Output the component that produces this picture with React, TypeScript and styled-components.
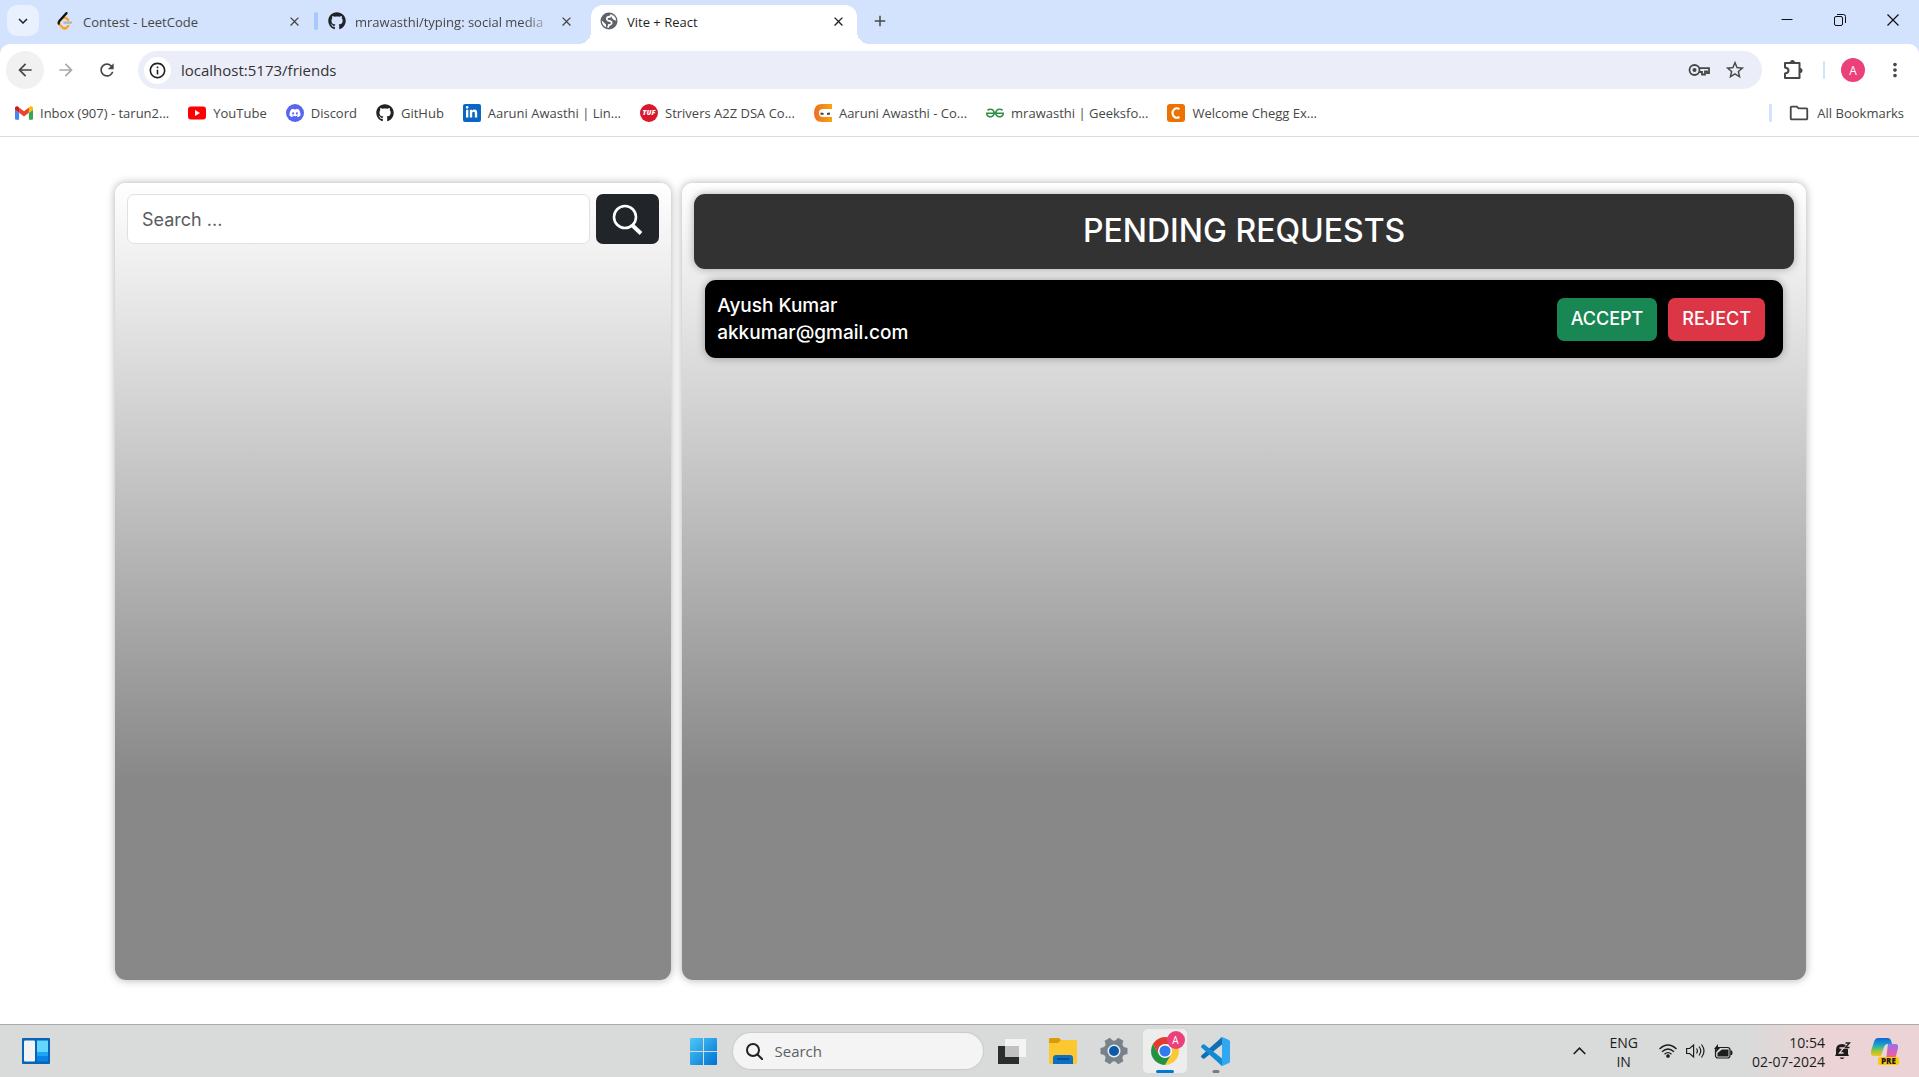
import React from "react";
import styled, { createGlobalStyle, css } from "styled-components";
import {
  MdAdd,
  MdArrowBack,
  MdArrowForward,
  MdClose,
  MdExpandMore,
  MdInfoOutline,
  MdMoreVert,
  MdOutlineFolder,
  MdRefresh,
  MdStarBorder,
} from "react-icons/md";
import { FaDiscord, FaGithub, FaLinkedinIn } from "react-icons/fa";
import { SiGeeksforgeeks } from "react-icons/si";

const uiFont = '"Open Sans", "Noto Sans", sans-serif';
const pageFont = 'Inter, "Open Sans", sans-serif';

const GlobalStyle = createGlobalStyle`
  *, *::before, *::after { box-sizing: border-box; }
  body { margin: 0; background: #fff; font-family: ${uiFont}; color: #474747; }
  button, input { font: inherit; color: inherit; }
  button { border: 0; padding: 0; background: none; cursor: pointer; }
  svg { display: block; flex: none; }
`;

const Window = styled.div`
  display: flex;
  flex-direction: column;
  min-height: 100vh;
`;

/* ---------- Tab strip ---------- */

const TabStrip = styled.header`
  display: flex;
  align-items: flex-start;
  height: 44px;
  padding: 5px 0 0 7px;
  background: #d3e2fd;
`;

const TabSearch = styled.button`
  display: grid;
  place-items: center;
  width: 32px;
  height: 31px;
  margin-right: 8px;
  border-radius: 10px;
  background: #e9f0fe;
  color: #1f1f1f;
`;

const Tabs = styled.nav`
  display: flex;
  gap: 6px;
`;

const Tab = styled.div<{ $active?: boolean; $divider?: boolean }>`
  position: relative;
  display: flex;
  align-items: center;
  gap: 9px;
  width: 266px;
  height: 39px;
  padding: 0 9px 7px;
  font-size: 13px;
  color: #474747;
  ${(p) =>
    p.$divider &&
    css`
      &::after {
        content: "";
        position: absolute;
        right: -5px;
        top: 7px;
        width: 4px;
        height: 18px;
        border-radius: 2px;
        background: #a8c7fa;
      }
    `}
  ${(p) =>
    p.$active &&
    css`
      color: #1f1f1f;
      background: #fff;
      border-radius: 12px 12px 0 0;
      &::before,
      &::after {
        content: "";
        position: absolute;
        bottom: 0;
        width: 12px;
        height: 12px;
      }
      &::before {
        right: 100%;
        background: radial-gradient(circle at 0 0, transparent 12px, #fff 12px);
      }
      &::after {
        left: 100%;
        background: radial-gradient(circle at 100% 0, transparent 12px, #fff 12px);
      }
    `}
`;

const TabTitle = styled.button<{ $fade?: boolean }>`
  flex: 1;
  min-width: 0;
  padding-top: 2px;
  white-space: nowrap;
  text-align: left;
  line-height: 20px;
  ${(p) =>
    p.$fade &&
    css`
      mask-image: linear-gradient(to right, #000 88%, transparent 104%);
    `}
`;

const TabClose = styled.button`
  display: grid;
  place-items: center;
  width: 20px;
  height: 20px;
`;

const NewTab = styled.button`
  display: grid;
  place-items: center;
  width: 32px;
  height: 32px;
  margin-left: 7px;
`;

const WindowControls = styled.div`
  display: flex;
  margin-left: auto;
`;

const WindowButton = styled.button`
  display: grid;
  place-items: center;
  width: 53px;
  height: 30px;
  color: #111;
`;

/* ---------- Toolbar ---------- */

const Chrome = styled.div`
  background: #d3e2fd;
`;

const Toolbar = styled.div`
  display: flex;
  align-items: center;
  gap: 3px;
  height: 52px;
  padding: 0 5px 0 6px;
  background: #fff;
  border-radius: 10px 10px 0 0;
`;

const NavButton = styled.button<{ $hovered?: boolean; $muted?: boolean }>`
  display: grid;
  place-items: center;
  width: 38px;
  height: 38px;
  border-radius: 50%;
  background: ${(p) => (p.$hovered ? "#f1f1f1" : "transparent")};
  color: ${(p) => (p.$muted ? "#a9a9a9" : "#474747")};
`;

const AddressBar = styled.form`
  flex: 1;
  display: flex;
  align-items: center;
  gap: 10px;
  height: 38px;
  margin: 0 9px;
  padding: 0 14px 0 6px;
  border-radius: 19px;
  background: #ebeef8;
`;

const SiteInfo = styled.button`
  display: grid;
  place-items: center;
  width: 27px;
  height: 27px;
  border-radius: 50%;
  background: #fff;
  color: #1f1f1f;
`;

const AddressInput = styled.input`
  flex: 1;
  min-width: 0;
  border: 0;
  padding: 0;
  background: none;
  outline: none;
  font-size: 15px;
  color: #333;
`;

const AddressAction = styled.button`
  display: grid;
  place-items: center;
  width: 26px;
  height: 26px;
  color: #474747;
`;

const Divider = styled.span`
  width: 2px;
  height: 18px;
  margin: 0 13px 0 8px;
  border-radius: 1px;
  background: #d3e2fd;
`;

const Avatar = styled.button`
  display: grid;
  place-items: center;
  width: 24px;
  height: 24px;
  margin-right: 8px;
  border-radius: 50%;
  background: #ec407a;
  color: #fff;
  font-size: 12px;
`;

/* ---------- Bookmarks ---------- */

const Bookmarks = styled.nav`
  display: flex;
  align-items: center;
  gap: 19px;
  height: 41px;
  padding: 0 15px 7px 15px;
  background: #fff;
  border-bottom: 1px solid #dcdcdc;
`;

const Bookmark = styled.a`
  display: flex;
  align-items: center;
  gap: 7px;
  font-size: 13px;
  line-height: 20px;
  color: #474747;
  white-space: nowrap;
  text-decoration: none;
`;

const AllBookmarks = styled.div`
  display: flex;
  align-items: center;
  gap: 16px;
  margin-left: auto;
  &::before {
    content: "";
    width: 3px;
    height: 18px;
    border-radius: 1px;
    background: #d3e2fd;
  }
`;

/* ---------- Page ---------- */

const Page = styled.main`
  flex: 1;
  display: grid;
  grid-template-columns: 49fr 99fr;
  gap: 11px;
  padding: 46px 113px 44px 115px;
  background: #fff;
  font-family: ${pageFont};
`;

const Panel = styled.section`
  padding: 11px 12px;
  border-radius: 11px;
  background: linear-gradient(#fff, #888 75%);
  box-shadow: 0 0 9px rgba(0, 0, 0, 0.32);
`;

const SearchForm = styled.form`
  display: flex;
  gap: 6px;
`;

const SearchInput = styled.input`
  flex: 1;
  min-width: 0;
  height: 50px;
  padding: 0 14px;
  border: 1px solid #dee2e6;
  border-radius: 7px;
  background: #fff;
  font-size: 18px;
  outline: none;
  &::placeholder {
    color: #595c5f;
    opacity: 1;
  }
`;

const SearchButton = styled.button`
  display: grid;
  place-items: center;
  width: 63px;
  border-radius: 7px;
  background: #212529;
  color: #fff;
`;

const PanelTitle = styled.h1`
  margin: 0 0 11px;
  padding: 15px 16px 17px;
  border-radius: 11px;
  background: #323232;
  box-shadow: 0 0 9px rgba(0, 0, 0, 0.32);
  color: #fff;
  font-size: 32px;
  font-weight: 500;
  line-height: 43px;
  text-align: center;
`;

const RequestList = styled.ul`
  margin: 0;
  padding: 0 11px;
  list-style: none;
`;

const RequestRow = styled.li`
  display: flex;
  align-items: center;
  gap: 11px;
  padding: 12px 18px 12px 12px;
  border-radius: 11px;
  background: #000;
  box-shadow: 0 0 9px rgba(0, 0, 0, 0.32);
  color: #fff;
  font-weight: 500;
`;

const Person = styled.div`
  flex: 1;
  font-size: 19px;
  line-height: 27px;
`;

const ActionButton = styled.button<{ $tone: "accept" | "reject" }>`
  height: 43px;
  padding: 0 14px 2px;
  border-radius: 7px;
  background: ${(p) => (p.$tone === "accept" ? "#198754" : "#dc3545")};
  font-size: 18px;
`;

/* ---------- Taskbar ---------- */

const Taskbar = styled.footer`
  display: grid;
  grid-template-columns: 1fr auto 1fr;
  align-items: center;
  height: 53px;
  border-top: 1px solid #aaa;
  background: linear-gradient(to right, #d9dada 91%, #ecd4d6 95%);
`;

const TaskbarStart = styled.div`
  display: flex;
  padding-left: 22px;
`;

const TaskbarApps = styled.div`
  display: flex;
  align-items: center;
  gap: 7px;
`;

const AppButton = styled.button<{ $active?: boolean; $running?: boolean }>`
  position: relative;
  display: grid;
  place-items: center;
  width: 44px;
  height: 44px;
  border-radius: 5px;
  background: ${(p) => (p.$active ? "#ededed" : "transparent")};
  ${(p) =>
    (p.$active || p.$running) &&
    css`
      &::after {
        content: "";
        position: absolute;
        left: 50%;
        bottom: 0;
        width: ${p.$active ? "18px" : "7px"};
        height: 3px;
        border-radius: 2px;
        background: ${p.$active ? "#0078d4" : "#7c7c7c"};
        transform: translateX(-50%);
      }
    `}
`;

const AppBadge = styled.span`
  position: absolute;
  top: 2px;
  right: 2px;
  width: 18px;
  height: 18px;
  border-radius: 50%;
  background: #ec407a;
  color: #fff;
  font-size: 10px;
  line-height: 18px;
`;

const TaskSearch = styled.label`
  display: flex;
  align-items: center;
  gap: 12px;
  width: 250px;
  height: 36px;
  padding: 0 13px;
  border-radius: 18px;
  background: #f4f4f4;
  box-shadow: 0 0 1px 1px #cacaca;
  color: #222;
`;

const TaskSearchInput = styled.input`
  width: 100%;
  border: 0;
  padding: 0;
  background: none;
  outline: none;
  font-size: 15px;
  &::placeholder {
    color: #606060;
    opacity: 1;
  }
`;

const Tray = styled.div`
  display: flex;
  align-items: center;
  justify-content: flex-end;
  gap: 9px;
  padding-right: 21px;
  color: #1c1c1c;
`;

const TrayText = styled.button<{ $align: "center" | "right" }>`
  margin: 0 ${(p) => (p.$align === "center" ? "12px" : "0 0 10px")};
  ${(p) => p.$align === "right" && "margin: 0 0 0 10px;"}
  padding-top: 2px;
  font-size: 14px;
  line-height: 19px;
  text-align: ${(p) => p.$align};
`;

const TrayIcon = styled.button`
  display: grid;
  place-items: center;
  min-width: 18px;
  height: 28px;
`;

/* ---------- Icons ---------- */

const LeetCodeIcon = () => (
  <svg width="18" height="18" viewBox="0 0 24 24" fill="none" strokeWidth="3" strokeLinecap="round">
    <path d="M11 14h9" stroke="#b3b3b3" />
    <path d="M6.500 10.500 5 12q-2 2.500 0 5l4 4q2.500 2 5 0l2.400-2.400M16 10.500l-2-2q-2.400-2-5 0" stroke="#ffa116" />
    <path d="M14 1.500 4.800 11.500q-1.500 1.800-1.200 4" stroke="#111" />
  </svg>
);

const GlobeIcon = () => (
  <svg width="18" height="18" viewBox="0 0 18 18">
    <circle cx="9" cy="9" r="8.500" fill="#5f6368" />
    <path
      d="M11.500 2.500q-.500 2.500-3 2.500-2 0-1.500 2.500.500 1.500 3 1.500 2 .500 1.500 2.500-.500 1.500-2.500 1.500-.500 2-1.500 2.500"
      fill="none"
      stroke="#fff"
      strokeWidth="1.800"
    />
    <path d="M1.800 8.500 6 12.500v2.800Q1.800 13 1.800 8.500zM12.500 2.700q3.500 2 3.700 6l-3-1.200-1.500-2z" fill="#fff" />
  </svg>
);

const GmailIcon = () => (
  <svg width="18" height="18" viewBox="52 31 88 88">
    <path fill="#4285f4" d="M58 108h14V74L52 59v43c0 3.32 2.69 6 6 6" />
    <path fill="#34a853" d="M120 108h14c3.32 0 6-2.69 6-6V59l-20 15" />
    <path fill="#fbbc04" d="M120 48v26l20-15v-8c0-7.42-8.47-11.65-14.4-7.2" />
    <path fill="#ea4335" d="M72 74V48l24 18 24-18v26L96 92" />
    <path fill="#c5221f" d="M52 51v8l20 15V48l-5.600-4.200c-5.940-4.450-14.400-.22-14.400 7.200" />
  </svg>
);

const YouTubeIcon = () => (
  <svg width="18" height="18" viewBox="0 0 18 18">
    <rect y="2.500" width="18" height="13" rx="3" fill="#f00" />
    <path d="M7 6v6l5-3z" fill="#fff" />
  </svg>
);

const DiscordIcon = () => (
  <IconBadge $color="#5865f2" $round>
    <FaDiscord size={12} />
  </IconBadge>
);

const IconBadge = styled.span<{ $color: string; $round?: boolean }>`
  display: grid;
  place-items: center;
  width: 18px;
  height: 18px;
  border-radius: ${(p) => (p.$round ? "50%" : "2px")};
  background: ${(p) => p.$color};
  color: #fff;
  font-size: 7px;
  font-style: italic;
  font-weight: 800;
  line-height: 18px;
`;

const CodingNinjasIcon = () => (
  <svg width="18" height="18" viewBox="0 0 18 18">
    <defs>
      <linearGradient id="ninja">
        <stop stopColor="#ee6c26" />
        <stop offset="1" stopColor="#f7a60b" />
      </linearGradient>
    </defs>
    <path d="M18 0v5H9Q5 5 5 9t4 4h9v5H8q-8 0-8-9t8-9z" fill="url(#ninja)" />
    <path d="M6.500 9.500 9.500 10M13 10l3-.500" stroke="#444" strokeWidth="2" />
  </svg>
);

const CheggIcon = () => (
  <svg width="18" height="18" viewBox="0 0 18 18">
    <rect width="18" height="18" rx="3" fill="#eb7100" />
    <path d="M12.500 5q-3-1.500-5 0-2 1.800-2 4t2 4q2 1.500 5 0" fill="none" stroke="#fff" strokeWidth="2.200" />
  </svg>
);

const MinimizeIcon = () => (
  <svg width="12" height="12" viewBox="0 0 12 12" stroke="currentColor">
    <path d="M.500 5.500h11" />
  </svg>
);

const RestoreIcon = () => (
  <svg width="12" height="12" viewBox="0 0 12 12" fill="none" stroke="currentColor">
    <rect x=".500" y="2.500" width="8" height="9" rx="1.500" />
    <path d="M3 .500h6.500q2 0 2 2V9" />
  </svg>
);

const CloseWindowIcon = () => (
  <svg width="12" height="12" viewBox="0 0 12 12" stroke="currentColor" strokeWidth="1.200">
    <path d="m.500.500 11 11m0-11-11 11" />
  </svg>
);

const KeyIcon = () => (
  <svg width="22" height="14" viewBox="0 0 22 14" fill="none" stroke="currentColor" strokeWidth="1.800">
    <path d="M11 5.200h10v5h-2V8.500h-2v3h-3V9h-3" />
    <circle cx="6.500" cy="7" r="5" />
    <circle cx="6.500" cy="7" r="2" fill="currentColor" stroke="none" />
  </svg>
);

const ExtensionIcon = () => (
  <svg width="20" height="20" viewBox="0 0 20 20" fill="none" stroke="currentColor" strokeWidth="2">
    <path d="M2 3h14.500v15H2v-4.500q3.500-.500 3.500-3T2 7.500z" strokeLinejoin="round" />
    <path d="M7 2.500a2.500 2.500 0 0 1 5 0zM17 8a2.500 2.500 0 0 1 0 5z" fill="currentColor" stroke="none" />
  </svg>
);

const PageSearchIcon = () => (
  <svg width="31" height="31" viewBox="0 0 31 31" fill="none" stroke="currentColor">
    <circle cx="13" cy="13" r="11" strokeWidth="2.600" />
    <path d="m20.500 21.500 8.500 8" strokeWidth="4" />
  </svg>
);

const WidgetsIcon = () => (
  <svg width="28" height="26" viewBox="0 0 28 26">
    <rect width="28" height="26" rx="1" fill="#0a63b4" />
    <rect x="2" y="2.500" width="11" height="21" rx="1" fill="#f3f3f3" />
    <path d="M15 2.500h11V14H15z" fill="#62d6ff" />
    <path d="M15 14h11v4.500H15z" fill="#1da4f7" />
    <path d="M15 18.500h11v5H15z" fill="#0483e8" />
  </svg>
);

const WindowsIcon = () => (
  <svg width="27" height="27" viewBox="0 0 27 27">
    <defs>
      <linearGradient id="win" x2="1" y2="1" gradientUnits="objectBoundingBox">
        <stop stopColor="#4cc9f8" />
        <stop offset="1" stopColor="#0070d2" />
      </linearGradient>
    </defs>
    <path d="M1 0h12v13H0V1q0-1 1-1zm13 0h12q1 0 1 1v12H14zM0 14h13v13H1q-1 0-1-1zm14 0h13v12q0 1-1 1H14z" fill="url(#win)" />
  </svg>
);

const TaskSearchIcon = () => (
  <svg width="17" height="17" viewBox="0 0 17 17" fill="none" stroke="currentColor" strokeWidth="2">
    <circle cx="7" cy="7" r="6" />
    <path d="m11.500 11.500 5 5" strokeLinecap="round" />
  </svg>
);

const TaskViewIcon = () => (
  <svg width="28" height="27" viewBox="0 0 28 27">
    <path d="M0 8h21v18H0z" fill="#2b2c2c" />
    <path d="M7 1h21v18H7z" fill="#f4f4f4" />
    <path d="M7 8h14v11H7z" fill="#c1c1c1" />
  </svg>
);

const ExplorerIcon = () => (
  <svg width="28" height="26" viewBox="0 0 28 26">
    <path d="M1 0h9l2 2v5H0V1q0-1 1-1z" fill="#dc9a05" />
    <path d="M0 5h9l3-3h15q1 0 1 1v22q0 1-1 1H1q-1 0-1-1z" fill="#fdc82f" />
    <path d="M4 26v-6q0-3 3-3h14q3 0 3 3v6z" fill="#0b6fc4" />
    <path d="M8 21h12" stroke="#07427d" strokeWidth="1.500" />
  </svg>
);

const GearIcon = () => (
  <svg width="28" height="28" viewBox="0 0 28 28">
    <g fill="#78828b">
      <circle cx="14" cy="14" r="10.500" />
      {[30, 90, 150, 210, 270, 330].map((angle) => (
        <path key={angle} d="M9.500 6 11 .500h6L18.500 6z" transform={`rotate(${angle} 14 14)`} />
      ))}
    </g>
    <circle cx="14" cy="14" r="6.500" fill="#e8eef3" />
    <circle cx="14" cy="14" r="5" fill="#0c59a8" />
  </svg>
);

const ChromeIcon = () => (
  <svg width="28" height="28" viewBox="0 0 48 48">
    <circle cx="24" cy="24" r="12" fill="#fff" />
    <path d="M24 12h20.780a24 24 0 0 0-41.560 0L13.610 30A12 12 0 0 1 24 12z" fill="#e33b2e" />
    <path d="M34.390 30 24 48a24 24 0 0 0 20.780-36H24a12 12 0 0 1 10.390 18z" fill="#fcc934" />
    <path d="M13.610 30 3.220 12A24 24 0 0 0 24 48l10.390-18a12 12 0 0 1-20.780 0z" fill="#229342" />
    <circle cx="24" cy="24" r="9.500" fill="#2f7bef" />
  </svg>
);

const VsCodeIcon = () => (
  <svg width="29" height="29" viewBox="0 0 29 29">
    <path d="M21 0v7.500L3.500 21.500q-1 .500-1.700 0L.400 20.200q-.800-.800 0-1.700z" fill="#0f6fb3" />
    <path d="M21 29v-7.500L3.500 7.500q-1-.500-1.700 0L.400 8.800q-.800.800 0 1.700z" fill="#1289d4" />
    <path d="m21 0 7 3q1 .500 1 1.500v20q0 1-1 1.500l-7 3q-1 0-1.500-1 1.500.500 1.500-1V2q0-1.500-1.500-1Q20 0 21 0z" fill="#2fa7f2" />
  </svg>
);

const ChevronUpIcon = () => (
  <svg width="13" height="8" viewBox="0 0 13 8" fill="none" stroke="currentColor" strokeWidth="1.600">
    <path d="m.700 7 5.800-5.800L12.300 7" />
  </svg>
);

const WifiIcon = () => (
  <svg width="18" height="14" viewBox="0 0 18 14" fill="none" stroke="currentColor" strokeWidth="1.300">
    <path d="M.500 5Q9-3 17.500 5M3 7.700q6-5.400 12 0M5.500 10.200q3.500-3 7 0" />
    <circle cx="9" cy="12" r="1.200" fill="currentColor" />
  </svg>
);

const SpeakerIcon = () => (
  <svg width="19" height="16" viewBox="0 0 19 16" fill="none" stroke="currentColor" strokeWidth="1.200">
    <path d="M.600 5.500h3l4-3.500v12l-4-3.500h-3zM10.500 5.500q1.800 2.500 0 5M13 3.500q3.500 4.500 0 9M15.500 1.500q5 6.500 0 13" />
  </svg>
);

const BatteryIcon = () => (
  <svg width="19" height="15" viewBox="0 0 19 15">
    <rect x="1.500" y="3.500" width="14.500" height="10.500" rx="2.500" fill="none" stroke="currentColor" strokeWidth="1.200" />
    <path d="M8 5.500h6.500v7h-11V9zM16.500 6.500H18q1 2 0 4.500h-1.500z" fill="currentColor" />
    <path d="M4 0 0 5h2.500L1.500 9 6.500 3.500H4z" fill="currentColor" />
  </svg>
);

const BellIcon = () => (
  <svg width="16" height="18" viewBox="0 0 16 18">
    <path d="M7 2q-6 0-6 6v4l-1 2h14l-1-2V8q0-6-6-6zM4.500 15.500h5q-2.500 3-5 0z" fill="currentColor" />
    <path d="M4.500 6h4l-4 5h4" fill="none" stroke="#ecd4d6" strokeWidth="1.300" />
    <path d="M10.500 1h4l-4 4.500h4" fill="none" stroke="#ecd4d6" strokeWidth="2.600" />
    <path d="M10.500 1h4l-4 4.500h4" fill="none" stroke="currentColor" strokeWidth="1.300" />
  </svg>
);

const CopilotMark = styled.button`
  position: relative;
  width: 27px;
  height: 27px;
  margin-left: 10px;
`;

const CopilotTag = styled.span`
  position: absolute;
  right: -1px;
  bottom: 0;
  width: 21px;
  border-radius: 2px;
  background: #ffc800;
  color: #1c1c1c;
  font-size: 8px;
  font-weight: 800;
  line-height: 8px;
`;

const CopilotIcon = () => (
  <svg width="27" height="27" viewBox="0 0 27 27">
    <defs>
      <linearGradient id="cpA" x2="0" y2="1">
        <stop stopColor="#1265d8" />
        <stop offset=".400" stopColor="#18a8c9" />
        <stop offset=".700" stopColor="#8fc63f" />
        <stop offset="1" stopColor="#f7c21c" />
      </linearGradient>
      <linearGradient id="cpB" x2="0" y2="1">
        <stop stopColor="#9d6bf2" />
        <stop offset=".600" stopColor="#ec5fa0" />
        <stop offset="1" stopColor="#f78a5a" />
      </linearGradient>
    </defs>
    <path d="M17 6h7q4 0 3 4l-3 12q-1 4-5 4h-8q3 0 4-4z" fill="url(#cpB)" />
    <path d="M7 0h10q3 0 4 6h-4q-3 0-4 3l-3 9H3q-4 0-3-5L3 4q1-4 4-4z" fill="url(#cpA)" />
  </svg>
);

const GithubIcon = () => <FaGithub size={18} color="#1f2328" />;

const bookmarks = [
  { icon: <GmailIcon />, label: "Inbox (907) - tarun2..." },
  { icon: <YouTubeIcon />, label: "YouTube" },
  { icon: <DiscordIcon />, label: "Discord" },
  { icon: <GithubIcon />, label: "GitHub" },
  {
    icon: (
      <IconBadge $color="#0a66c2">
        <FaLinkedinIn size={13} />
      </IconBadge>
    ),
    label: "Aaruni Awasthi | Lin...",
  },
  {
    icon: (
      <IconBadge $color="#d9182d" $round>
        TUF
      </IconBadge>
    ),
    label: "Strivers A2Z DSA Co...",
  },
  { icon: <CodingNinjasIcon />, label: "Aaruni Awasthi - Co..." },
  { icon: <SiGeeksforgeeks size={18} color="#2f8d46" />, label: "mrawasthi | Geeksfo..." },
  { icon: <CheggIcon />, label: "Welcome Chegg Ex..." },
];

const requests = [{ name: "Ayush Kumar", email: "akkumar@gmail.com" }];

const stop = (event: React.FormEvent) => event.preventDefault();

export default function App() {
  return (
    <Window>
      <GlobalStyle />
      <TabStrip>
        <TabSearch aria-label="Search tabs">
          <MdExpandMore size={18} />
        </TabSearch>
        <Tabs aria-label="Tabs">
          <Tab $divider>
            <LeetCodeIcon />
            <TabTitle>Contest - LeetCode</TabTitle>
            <TabClose aria-label="Close tab">
              <MdClose size={15} />
            </TabClose>
          </Tab>
          <Tab>
            <GithubIcon />
            <TabTitle $fade>mrawasthi/typing: social media</TabTitle>
            <TabClose aria-label="Close tab">
              <MdClose size={15} />
            </TabClose>
          </Tab>
          <Tab $active>
            <GlobeIcon />
            <TabTitle>Vite + React</TabTitle>
            <TabClose aria-label="Close tab">
              <MdClose size={15} />
            </TabClose>
          </Tab>
        </Tabs>
        <NewTab aria-label="New tab">
          <MdAdd size={18} />
        </NewTab>
        <WindowControls>
          <WindowButton aria-label="Minimize">
            <MinimizeIcon />
          </WindowButton>
          <WindowButton aria-label="Restore">
            <RestoreIcon />
          </WindowButton>
          <WindowButton aria-label="Close">
            <CloseWindowIcon />
          </WindowButton>
        </WindowControls>
      </TabStrip>

      <Chrome>
        <Toolbar>
          <NavButton $hovered aria-label="Back">
            <MdArrowBack size={20} />
          </NavButton>
          <NavButton $muted aria-label="Forward">
            <MdArrowForward size={20} />
          </NavButton>
          <NavButton aria-label="Reload">
            <MdRefresh size={20} />
          </NavButton>
          <AddressBar onSubmit={stop}>
            <SiteInfo type="button" aria-label="Site information">
              <MdInfoOutline size={19} />
            </SiteInfo>
            <AddressInput aria-label="Address" defaultValue="localhost:5173/friends" />
            <AddressAction type="button" aria-label="Passwords">
              <KeyIcon />
            </AddressAction>
            <AddressAction type="button" aria-label="Bookmark this page">
              <MdStarBorder size={22} />
            </AddressAction>
          </AddressBar>
          <NavButton aria-label="Extensions">
            <ExtensionIcon />
          </NavButton>
          <Divider />
          <Avatar aria-label="Profile">A</Avatar>
          <NavButton aria-label="Menu">
            <MdMoreVert size={22} />
          </NavButton>
        </Toolbar>
        <Bookmarks aria-label="Bookmarks">
          {bookmarks.map((item) => (
            <Bookmark key={item.label} href="#">
              {item.icon}
              {item.label}
            </Bookmark>
          ))}
          <AllBookmarks>
            <Bookmark href="#">
              <MdOutlineFolder size={22} />
              All Bookmarks
            </Bookmark>
          </AllBookmarks>
        </Bookmarks>
      </Chrome>

      <Page>
        <Panel>
          <SearchForm onSubmit={stop}>
            <SearchInput type="text" aria-label="Search friends" placeholder="Search ..." />
            <SearchButton aria-label="Search">
              <PageSearchIcon />
            </SearchButton>
          </SearchForm>
        </Panel>
        <Panel>
          <PanelTitle>PENDING REQUESTS</PanelTitle>
          <RequestList>
            {requests.map((request) => (
              <RequestRow key={request.email}>
                <Person>
                  <div>{request.name}</div>
                  <div>{request.email}</div>
                </Person>
                <ActionButton $tone="accept">ACCEPT</ActionButton>
                <ActionButton $tone="reject">REJECT</ActionButton>
              </RequestRow>
            ))}
          </RequestList>
        </Panel>
      </Page>

      <Taskbar>
        <TaskbarStart>
          <button aria-label="Widgets">
            <WidgetsIcon />
          </button>
        </TaskbarStart>
        <TaskbarApps>
          <AppButton aria-label="Start">
            <WindowsIcon />
          </AppButton>
          <TaskSearch>
            <TaskSearchIcon />
            <TaskSearchInput aria-label="Search Windows" placeholder="Search" />
          </TaskSearch>
          <AppButton aria-label="Task view">
            <TaskViewIcon />
          </AppButton>
          <AppButton aria-label="File Explorer">
            <ExplorerIcon />
          </AppButton>
          <AppButton aria-label="Settings">
            <GearIcon />
          </AppButton>
          <AppButton $active aria-label="Chrome">
            <ChromeIcon />
            <AppBadge>A</AppBadge>
          </AppButton>
          <AppButton $running aria-label="Visual Studio Code">
            <VsCodeIcon />
          </AppButton>
        </TaskbarApps>
        <Tray>
          <TrayIcon aria-label="Show hidden icons">
            <ChevronUpIcon />
          </TrayIcon>
          <TrayText $align="center">
            ENG
            <br />
            IN
          </TrayText>
          <TrayIcon aria-label="Network">
            <WifiIcon />
          </TrayIcon>
          <TrayIcon aria-label="Volume">
            <SpeakerIcon />
          </TrayIcon>
          <TrayIcon aria-label="Battery">
            <BatteryIcon />
          </TrayIcon>
          <TrayText $align="right">
            10:54
            <br />
            02-07-2024
          </TrayText>
          <TrayIcon aria-label="Notifications">
            <BellIcon />
          </TrayIcon>
          <CopilotMark aria-label="Copilot">
            <CopilotIcon />
            <CopilotTag>PRE</CopilotTag>
          </CopilotMark>
        </Tray>
      </Taskbar>
    </Window>
  );
}
